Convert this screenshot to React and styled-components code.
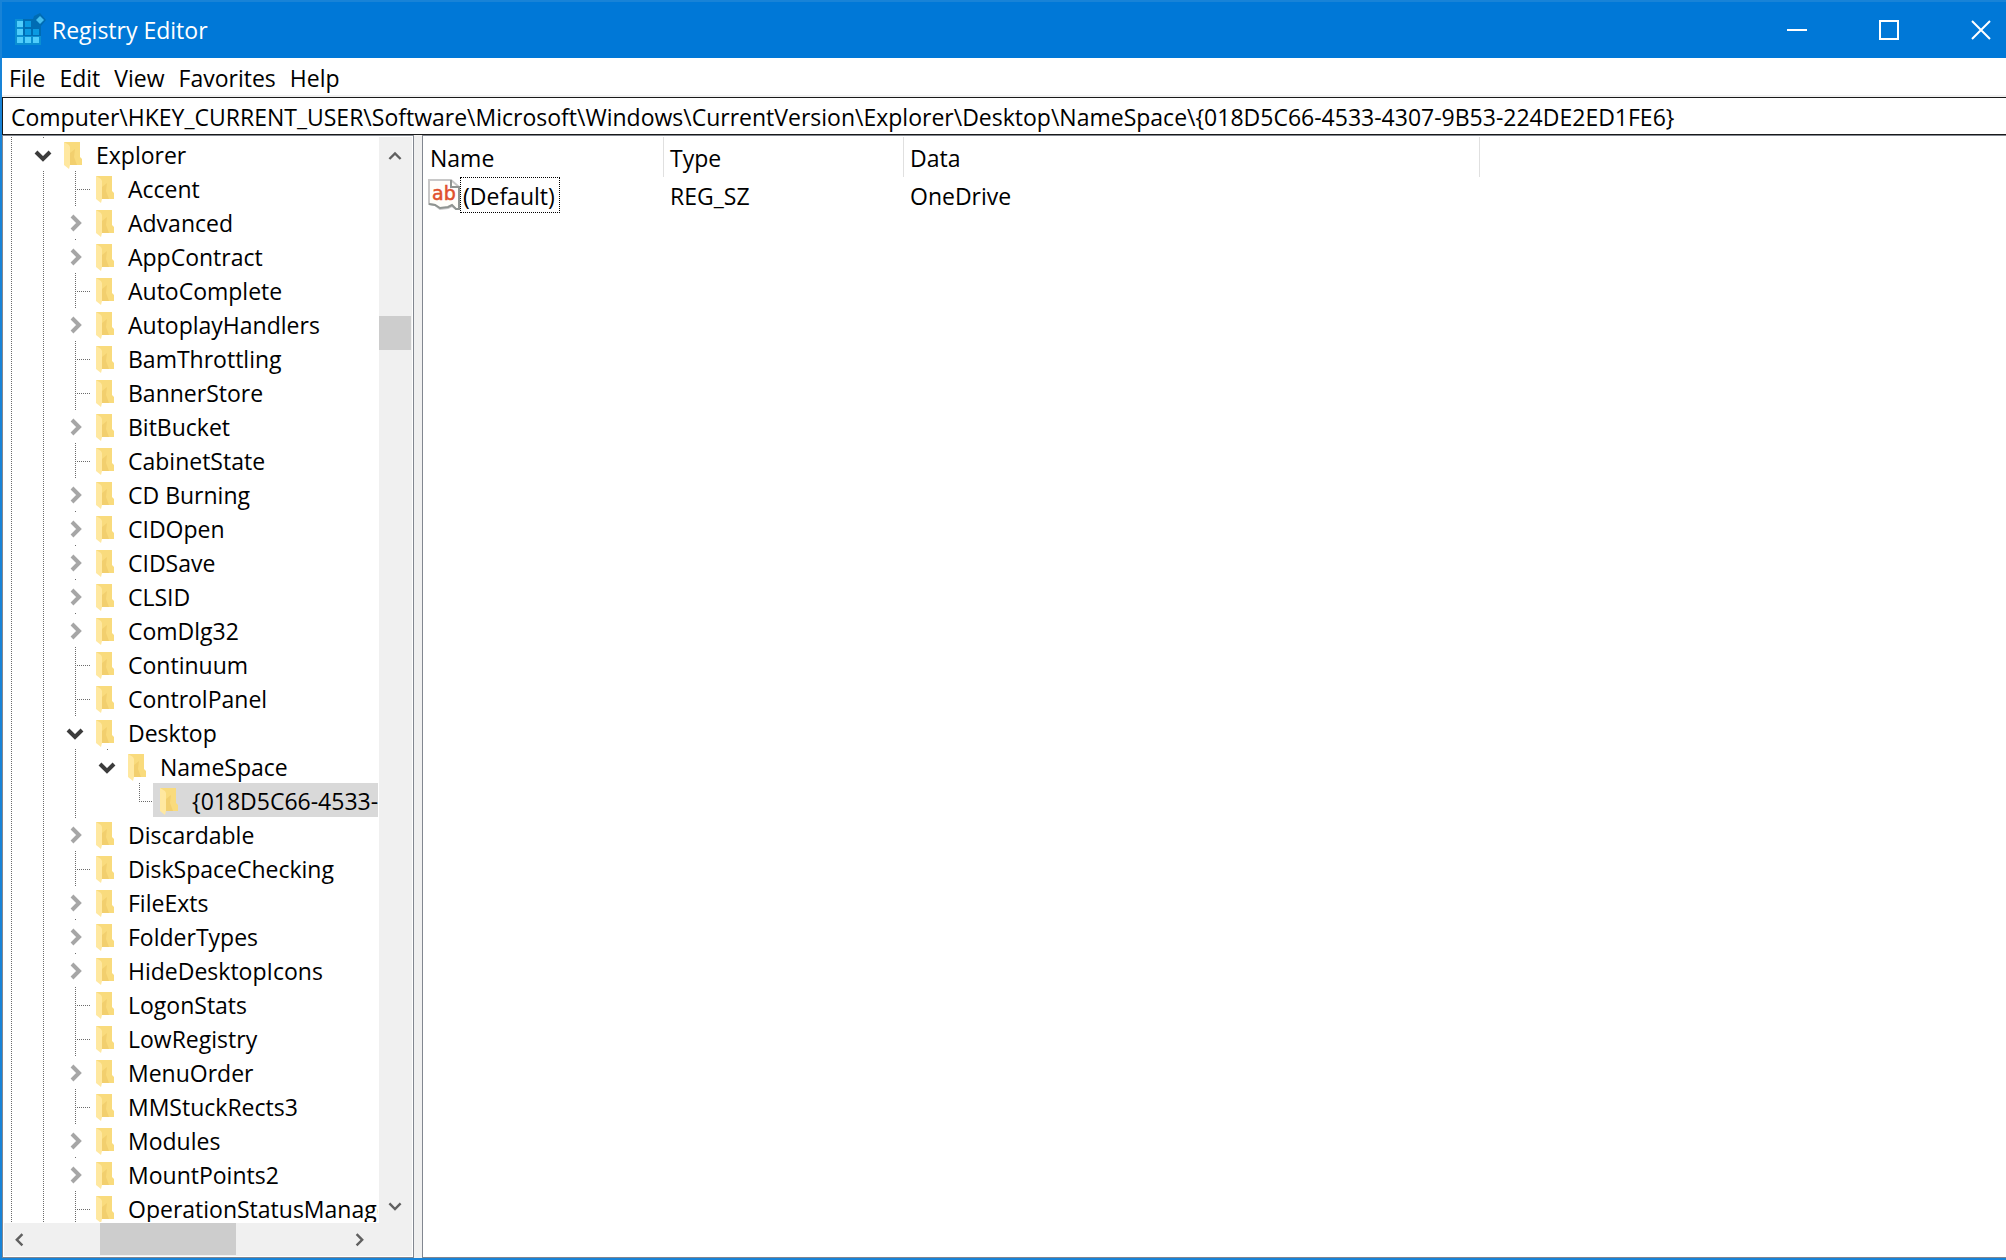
import React, {useState} from "react"
import styled, {createGlobalStyle, css} from "styled-components"

const GlobalStyle = createGlobalStyle`
    * {
        box-sizing: border-box;
    }
    body {
        margin: 0;
        font-family: "Open Sans", "Noto Sans", sans-serif;
        font-size: 23px;
        color: #000;
        overflow: hidden;
    }
    button, input {
        font: inherit;
        color: inherit;
        margin: 0;
        padding: 0;
        border: 0;
        background: none;
    }
    svg {
        display: block;
        flex: none;
    }
`

const Window = styled.div`
    display: flex;
    flex-direction: column;
    height: 100vh;
    border: 2px solid #1883d7;
    border-right: 0;
    background: #f0f0f0;
`
const TitleBar = styled.header`
    display: flex;
    align-items: center;
    flex: none;
    height: 56px;
    padding: 0 15px 0 12px;
    background: #0078d7;
    color: #fff;
`
const Title = styled.h1`
    flex: 1;
    margin: 0 0 0 4px;
    font-size: 23px;
    font-weight: 400;
`
const WindowControls = styled.div`
    display: flex;
    gap: 72px;
`
const MenuBar = styled.nav`
    display: flex;
    flex: none;
    gap: 14px;
    height: 37px;
    padding: 2px 0 0 7px;
    background: #fff;
`
const AddressInput = styled.input`
    flex: none;
    width: 100%;
    height: 38px;
    margin-top: 2px;
    padding: 2px 0 0 8px;
    border: 1px solid #1a1a1a;
    border-right: 0;
    background: #fff;
    outline: none;
`
const Panes = styled.main`
    display: flex;
    flex: 1;
    gap: 8px;
    min-height: 0;
`
const Pane = styled.section`
    border: 1px solid #828790;
    padding: 1px;
    background: #fff;
`
const TreePane = styled(Pane)`
    display: grid;
    grid-template-columns: minmax(0, 1fr) 33px;
    grid-template-rows: minmax(0, 1fr) 33px;
    flex: 0 0 412px;
    padding-left: 0;
`
const ListPane = styled(Pane)`
    flex: 1;
    min-width: 0;
    border-right: 0;
`
const Tree = styled.ul`
    margin: 0 1px 1px 0;
    padding: 0;
    list-style: none;
    overflow: hidden;
`
const TreeRow = styled.li`
    display: flex;
    height: 34px;
`
const dots = direction => css`repeating-linear-gradient(${direction}, #6b6b6b 0 1px, transparent 1px 2px)`

const lineLengths = {full: "100%", half: "18px", dot: "1px", none: "0"}

// one 32px step of indentation, the dotted line runs 18px in
const Indent = styled.span`
    display: flex;
    align-items: center;
    flex: none;
    width: ${props => props.$first ? 22 : 32}px;
    padding-left: ${props => props.$first ? 0 : 8}px;
    background-image: ${dots("to bottom")};
    background-repeat: no-repeat;
    background-position: ${props => props.$first ? 8 : 18}px 0;
    background-size: 1px ${props => lineLengths[props.$line]};
`
const Branch = styled.span`
    width: 15px;
    flex: none;
    height: 1px;
    margin: 2px 0 0 10px;
    background-image: ${dots("to right")};
`
const Label = styled.span`
    display: flex;
    align-items: center;
    flex: none;
    gap: 14px;
    padding: 2px 8px 0 7px;
    line-height: 32px;
    white-space: nowrap;
    background: ${props => props.$selected ? "#d9d9d9" : "transparent"};
`
const ScrollBar = styled.div`
    display: flex;
    flex-direction: ${props => props.$vertical ? "column" : "row"};
    margin: ${props => props.$vertical ? "0" : "0 0 0 1px"};
    padding-right: ${props => props.$vertical ? 0 : 4}px;
    background: #f0f0f0;
`
const ScrollButton = styled.button`
    display: flex;
    align-items: center;
    justify-content: center;
    flex: none;
    width: 32px;
    height: ${props => props.$vertical ? 36 : 32}px;
`
const Track = styled.div`
    display: flex;
    flex-direction: inherit;
    flex: 1;
    min-width: 0;
    min-height: 0;
`
const Thumb = styled.div`
    flex: none;
    background: #cdcdcd;
    width: ${props => props.$vertical ? 32 : 136}px;
    height: ${props => props.$vertical ? 34 : 32}px;
    margin: ${props => props.$vertical ? "143px 0 0" : "0 0 0 64px"};
`
const Corner = styled.div`
    background: #f0f0f0;
`
const ValueTable = styled.table`
    table-layout: fixed;
    width: 1056px;
    border-collapse: separate;
    border-spacing: 0;
    text-align: left;
`
const ColumnHead = styled.th`
    width: ${props => props.$width}px;
    height: 40px;
    padding: 2px 0 0 6px;
    border-right: 1px solid #e0e0e0;
    font-weight: 400;
    line-height: 36px;
`
const Cell = styled.td`
    height: 36px;
    padding: ${props => props.$name ? "0 0 0 4px" : "2px 0 0 6px"};
    line-height: 34px;
`
const ValueName = styled.div`
    display: flex;
    align-items: center;
`
const FocusBox = styled.span`
    height: 36px;
    padding: 2px 4px 0 2px;
    border: 1px dotted #000;
    line-height: 32px;
`

const RegistryIcon = () => (
    <svg width="34" height="34" viewBox="0 0 34 34" aria-hidden="true">
        <path d="M1 6h26v26H1z" fill="#0a8fd3"/>
        <path d="M9 6h10l1-3 6-3 6 7-5 6v10H9z" fill="#006cb3"/>
        {[[3, 8], [3, 16], [3, 24], [11, 24], [19, 24]].map(([x, y]) =>
            <rect key={`${x}-${y}`} x={x} y={y} width="6" height="6" fill="#50cdfb"/>)}
        {[[11, 8], [11, 16], [19, 16]].map(([x, y]) =>
            <rect key={`${x}-${y}`} x={x} y={y} width="6" height="6" fill="#0a9ae2"/>)}
        <path d="M26 3l4 4-4 4-4-4z" fill="#43bdf0"/>
    </svg>
)

const FolderIcon = () => (
    <svg width="18" height="28" viewBox="0 0 18 28" aria-hidden="true">
        <path d="M0 1h16v15l2 2v6H5z" fill="#f9db7d"/>
        <path d="M6 12l5-4-1 8 3 8H6z" fill="#f2cf6e"/>
        <path d="M0 1l5 3 1 2v18l-1 4-5-4z" fill="#ffe8a0"/>
    </svg>
)

const StringIcon = () => (
    <svg width="32" height="32" viewBox="0 0 32 32" aria-hidden="true">
        <path d="M1 1h22l8 7v22h-3l-4-3-4 2-8 1-5-4-6-1z" fill="#fffefa" stroke="#c8c8c8" strokeWidth="2"/>
        <path d="M23 1v7h8v22h-3l-4-4-4 2-8 1-5-3-6-1" fill="none" stroke="#8f9491" strokeWidth="2"/>
        <text x="4" y="21" fontFamily="DejaVu Sans" fontSize="19" fill="#e0502c" stroke="#e0502c"
              strokeWidth=".5">ab</text>
    </svg>
)

const chevrons = {
    right: "M7 4l7 7-7 7",
    left: "M13 4l-7 7 7 7",
    down: "M3 8l7 7 7-7",
    up: "M3 15l7-7 7 7",
}

const Chevron = ({direction, color, size = 20, weight = 4}) => (
    <svg width={size} height={size} viewBox="0 0 20 20" fill="none" stroke={color} strokeWidth={weight}
         aria-hidden="true">
        <path d={chevrons[direction]}/>
    </svg>
)

const ScrollArrow = ({direction, vertical}) => (
    <ScrollButton $vertical={vertical} aria-label={`Scroll ${direction}`}>
        <Chevron direction={direction} color="#606060" size={16} weight={3}/>
    </ScrollButton>
)

const menus = ["File", "Edit", "View", "Favorites", "Help"]

// state: leaf, closed or open
const keys = [
    ["Explorer", 1, "open"],
    ["Accent", 2, "leaf"],
    ["Advanced", 2, "closed"],
    ["AppContract", 2, "closed"],
    ["AutoComplete", 2, "leaf"],
    ["AutoplayHandlers", 2, "closed"],
    ["BamThrottling", 2, "leaf"],
    ["BannerStore", 2, "leaf"],
    ["BitBucket", 2, "closed"],
    ["CabinetState", 2, "leaf"],
    ["CD Burning", 2, "closed"],
    ["CIDOpen", 2, "closed"],
    ["CIDSave", 2, "closed"],
    ["CLSID", 2, "closed"],
    ["ComDlg32", 2, "closed"],
    ["Continuum", 2, "leaf"],
    ["ControlPanel", 2, "leaf"],
    ["Desktop", 2, "open"],
    ["NameSpace", 3, "open"],
    ["{018D5C66-4533-4307-9B53-224DE2ED1FE6}", 4, "leaf"],
    ["Discardable", 2, "closed"],
    ["DiskSpaceChecking", 2, "leaf"],
    ["FileExts", 2, "closed"],
    ["FolderTypes", 2, "closed"],
    ["HideDesktopIcons", 2, "closed"],
    ["LogonStats", 2, "leaf"],
    ["LowRegistry", 2, "leaf"],
    ["MenuOrder", 2, "closed"],
    ["MMStuckRects3", 2, "leaf"],
    ["Modules", 2, "closed"],
    ["MountPoints2", 2, "closed"],
    ["OperationStatusManager", 2, "leaf"],
]

const KeyRow = ({name, level, state, selected}) => {
    const guides = Array.from({length: level}, (_, i) => i)
    const ownLine = state !== "leaf" ? "dot" : selected ? "half" : "full"

    return (
        <TreeRow role="treeitem" aria-level={level} aria-selected={selected}>
            {guides.map(i =>
                // NameSpace is the last key under Desktop, so its line stops there
                <Indent key={i} $first={i === 0} $line={i === 3 ? "none" : "full"}/>)}
            <Indent $line={ownLine}>
                {state === "leaf"
                    ? <Branch/>
                    : <button aria-label={`Toggle ${name}`}>
                        {state === "open"
                            ? <Chevron direction="down" color="#3c3c3c"/>
                            : <Chevron direction="right" color="#a6a6a6"/>}
                    </button>}
            </Indent>
            <Label $selected={selected}><FolderIcon/>{name}</Label>
        </TreeRow>
    )
}

const App = () => {

    const [path, setPath] = useState("Computer\\HKEY_CURRENT_USER\\Software\\Microsoft\\Windows\\CurrentVersion\\Explorer\\Desktop\\NameSpace\\{018D5C66-4533-4307-9B53-224DE2ED1FE6}")

    return (
        <Window>
            <GlobalStyle/>

            <TitleBar>
                <RegistryIcon/>
                <Title>Registry Editor</Title>
                <WindowControls>
                    <button aria-label="Minimize">
                        <svg width="20" height="20"><path d="M0 10h20" stroke="#fff" strokeWidth="2"/></svg>
                    </button>
                    <button aria-label="Maximize">
                        <svg width="20" height="20"><path d="M1 1h18v18H1z" fill="none" stroke="#fff" strokeWidth="2"/></svg>
                    </button>
                    <button aria-label="Close">
                        <svg width="20" height="20"><path d="M1 1l18 18M19 1L1 19" stroke="#fff" strokeWidth="2"/></svg>
                    </button>
                </WindowControls>
            </TitleBar>

            <MenuBar>
                {menus.map(menu => <button key={menu}>{menu}</button>)}
            </MenuBar>

            <AddressInput type="text" aria-label="Registry path" value={path}
                          onChange={event => setPath(event.target.value)}/>

            <Panes>
                <TreePane>
                    <Tree role="tree">
                        {keys.map(([name, level, state]) =>
                            <KeyRow key={name} name={name} level={level} state={state} selected={level === 4}/>)}
                    </Tree>
                    <ScrollBar $vertical>
                        <ScrollArrow direction="up" vertical/>
                        <Track><Thumb $vertical/></Track>
                        <ScrollArrow direction="down" vertical/>
                    </ScrollBar>
                    <ScrollBar>
                        <ScrollArrow direction="left"/>
                        <Track><Thumb/></Track>
                        <ScrollArrow direction="right"/>
                    </ScrollBar>
                    <Corner/>
                </TreePane>

                <ListPane>
                    <ValueTable>
                        <thead>
                            <tr>
                                <ColumnHead $width={240}>Name</ColumnHead>
                                <ColumnHead $width={240}>Type</ColumnHead>
                                <ColumnHead $width={576}>Data</ColumnHead>
                            </tr>
                        </thead>
                        <tbody>
                            <tr>
                                <Cell $name>
                                    <ValueName><StringIcon/><FocusBox>(Default)</FocusBox></ValueName>
                                </Cell>
                                <Cell>REG_SZ</Cell>
                                <Cell>OneDrive</Cell>
                            </tr>
                        </tbody>
                    </ValueTable>
                </ListPane>
            </Panes>
        </Window>
    )
}

export default App
